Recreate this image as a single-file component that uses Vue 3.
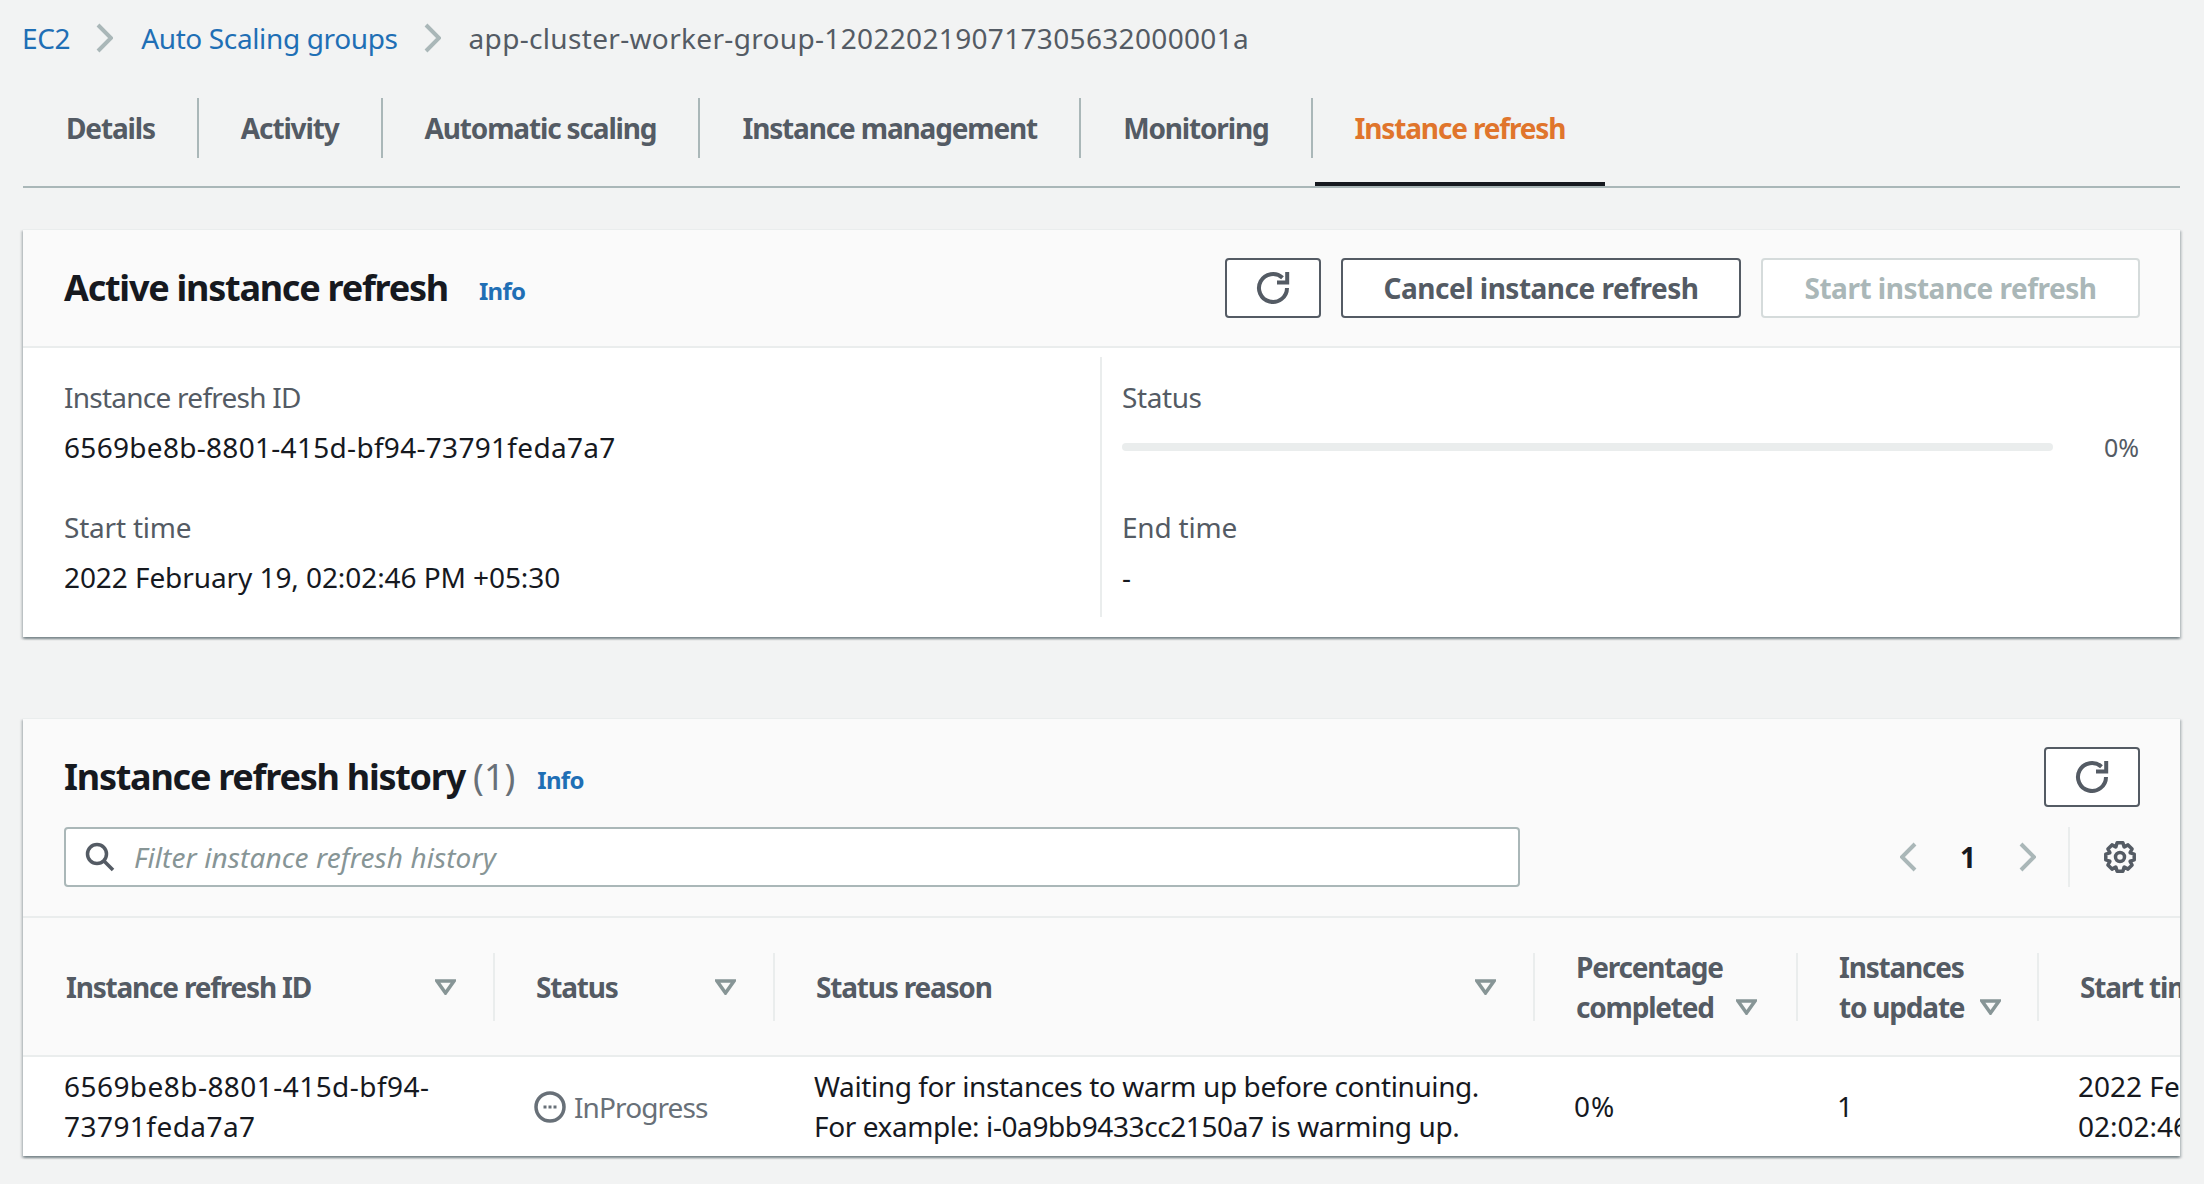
<script setup>
import { computed } from 'vue'

const tabs = ['Details', 'Activity', 'Automatic scaling', 'Instance management', 'Monitoring', 'Instance refresh']

const columns = [
  { key: 'id', lines: ['Instance refresh ID'], caret: true },
  { key: 'status', lines: ['Status'], caret: true },
  { key: 'reason', lines: ['Status reason'], caret: true },
  { key: 'pct', lines: ['Percentage', 'completed'], caret: true },
  { key: 'count', lines: ['Instances', 'to update'], caret: true },
  { key: 'start', lines: ['Start time'], caret: false }
]

// gear outline, 8 teeth
const gearPoints = computed(() => {
  const pts = []
  for (let i = 0; i < 8; i++) {
    const a = (i * Math.PI) / 4
    for (const [r, off] of [[11, -0.38], [14.5, -0.2], [14.5, 0.2], [11, 0.38]]) {
      pts.push(`${(16 + r * Math.sin(a + off)).toFixed(2)},${(16 - r * Math.cos(a + off)).toFixed(2)}`)
    }
  }
  return pts.join(' ')
})
</script>

<template>
  <div class="page">
    <!-- breadcrumb -->
    <nav class="crumbs">
      <a class="link">EC2</a>
      <svg class="chev" width="18" height="30" viewBox="0 0 18 30"><path d="M3 2l13 13L3 28" /></svg>
      <a class="link">Auto Scaling groups</a>
      <svg class="chev" width="18" height="30" viewBox="0 0 18 30"><path d="M3 2l13 13L3 28" /></svg>
      <span class="current">app-cluster-worker-group-1202202190717305632000001a</span>
    </nav>

    <!-- tabs -->
    <div class="tabs">
      <div v-for="(tab, i) in tabs" :key="tab" class="tab" :class="{ active: i === tabs.length - 1 }">{{ tab }}</div>
    </div>

    <!-- active refresh -->
    <section class="card">
      <header class="card-head">
        <div class="title-row">
          <h2 class="title">Active instance refresh</h2>
          <a class="info">Info</a>
        </div>
        <div class="actions">
          <button class="btn icon-btn">
            <svg width="34" height="34" viewBox="0 0 34 34" class="refresh"><path d="M31 17A14 14 0 1 1 26.5 6.7" /><path d="M21 11.5h10.2V1" /></svg>
          </button>
          <button class="btn cancel-btn">Cancel instance refresh</button>
          <button class="btn start-btn">Start instance refresh</button>
        </div>
      </header>
      <div class="details">
        <div class="col">
          <div class="label tight">Instance refresh ID</div>
          <div class="value mono-ish">6569be8b-8801-415d-bf94-73791feda7a7</div>
          <div class="label second">Start time</div>
          <div class="value date">2022 February 19, 02:02:46 PM +05:30</div>
        </div>
        <div class="col col-right">
          <div class="label">Status</div>
          <div class="value progress">
            <div class="bar"></div>
            <span class="pct">0%</span>
          </div>
          <div class="label second">End time</div>
          <div class="value">-</div>
        </div>
      </div>
    </section>

    <!-- history -->
    <section class="card history">
      <header class="history-head">
        <div class="history-top">
          <div class="title-row">
            <h2 class="title">Instance refresh history <span class="count">(1)</span></h2>
            <a class="info near">Info</a>
          </div>
          <button class="btn icon-btn">
            <svg width="34" height="34" viewBox="0 0 34 34" class="refresh"><path d="M31 17A14 14 0 1 1 26.5 6.7" /><path d="M21 11.5h10.2V1" /></svg>
          </button>
        </div>
        <div class="filter-row">
          <div class="search">
            <svg width="30" height="30" viewBox="0 0 30 30" class="search-icon"><circle cx="12" cy="12" r="9.5" /><path d="M19 19l9 9" /></svg>
            <span class="placeholder">Filter instance refresh history</span>
          </div>
          <div class="pager">
            <svg class="chev" width="18" height="30" viewBox="0 0 18 30"><path d="M15 2L2 15l13 13" /></svg>
            <span class="page-num">1</span>
            <svg class="chev" width="18" height="30" viewBox="0 0 18 30"><path d="M3 2l13 13L3 28" /></svg>
          </div>
          <div class="prefs">
            <svg width="32" height="32" viewBox="0 0 32 32" class="gear"><polygon :points="gearPoints" /><circle cx="16" cy="16" r="4.500" /></svg>
          </div>
        </div>
      </header>

      <div class="table-wrap">
        <table class="table">
          <thead>
            <tr>
              <th v-for="c in columns" :key="c.key" :class="'c-' + c.key">
                <div class="th-inner">
                  <span class="th-text">
                    <template v-for="(line, i) in c.lines" :key="line">
                      <br v-if="i > 0" />{{ line }}
                    </template>
                    <svg v-if="c.caret && c.lines.length > 1" class="caret inline" width="21" height="16" viewBox="0 0 21 16"><path d="M2 2h17l-8.500 12z" /></svg>
                  </span>
                  <svg v-if="c.caret && c.lines.length === 1" class="caret" width="21" height="16" viewBox="0 0 21 16"><path d="M2 2h17l-8.500 12z" /></svg>
                </div>
              </th>
            </tr>
          </thead>
          <tbody>
            <tr>
              <td class="id-cell">6569be8b-8801-415d-bf94-<br />73791feda7a7</td>
              <td>
                <span class="state">
                  <svg width="32" height="32" viewBox="0 0 32 32"><circle cx="16" cy="16" r="14" class="ring" /><rect x="9.500" y="14.500" width="3" height="3" /><rect x="14.500" y="14.500" width="3" height="3" /><rect x="19.500" y="14.500" width="3" height="3" /></svg>
                  InProgress
                </span>
              </td>
              <td class="reason">Waiting for instances to warm up before continuing.<br />For example: i-0a9bb9433cc2150a7 is warming up.</td>
              <td class="pct-cell">0%</td>
              <td>1</td>
              <td>2022 February 19,<br />02:02:46 PM +05:30</td>
            </tr>
          </tbody>
        </table>
      </div>
    </section>
  </div>
</template>

<style>
html, body {
  margin: 0;
  background: #f2f3f3;
}
</style>

<style scoped>
.page {
  box-sizing: border-box;
  width: 2204px;
  height: 1184px;
  padding: 0 24px 0 23px;
  overflow: hidden;
  background: #f2f3f3;
  font-family: "Noto Sans", "Open Sans", sans-serif;
  font-size: 28px;
  line-height: 40px;
  color: #16191f;
}

.crumbs {
  display: flex;
  align-items: center;
  height: 76px;
  margin-left: -1px;
}
.link {
  color: #1f6fb5;
  letter-spacing: -0.37px;
}
.crumbs .chev { margin: 0 28px 0 25px; }
.current {
  color: #545b64;
  letter-spacing: 0.33px;
}

.chev path {
  fill: none;
  stroke: #aab7b8;
  stroke-width: 4;
}

.tabs {
  display: flex;
  box-sizing: border-box;
  height: 112px;
  padding-top: 22px;
  border-bottom: 2px solid #aab7b8;
}
.tab {
  position: relative;
  display: flex;
  align-items: center;
  height: 60px;
  padding: 0 42px;
  border-right: 2px solid #aab7b8;
  font-weight: 700;
  letter-spacing: -1.15px;
  color: #545b64;
}
.tab:first-child { padding-left: 43px; }
.tab.active {
  border-right: 0;
  color: #e0752c;
}
.tab.active::after {
  content: "";
  position: absolute;
  left: 2px;
  right: 2px;
  bottom: -28px;
  height: 4px;
  background: #16191f;
}

.card {
  margin-top: 41px;
  background: #fff;
  border-top: 1px solid #eaeded;
  box-shadow: 0 2px 2px rgba(0, 28, 36, 0.3), 2px 2px 2px rgba(0, 28, 36, 0.15), -2px 2px 2px rgba(0, 28, 36, 0.15);
}
.card.history { margin-top: 81px; }

.card-head {
  display: flex;
  justify-content: space-between;
  align-items: center;
  height: 116px;
  padding: 0 40px 0 41px;
  background: #fafafa;
  border-bottom: 2px solid #eaeded;
}
.title-row {
  display: flex;
  align-items: center;
  gap: 31px;
}
.title {
  margin: 0;
  font-size: 36px;
  line-height: 44px;
  font-weight: 700;
  letter-spacing: -1.25px;
}
.count {
  font-weight: 400;
  letter-spacing: 0;
  color: #687078;
}
.info {
  margin-top: 6px;
  font-size: 24px;
  font-weight: 700;
  letter-spacing: -0.7px;
  color: #1f6fb5;
}
.info.near { margin-left: -9px; }
.actions {
  display: flex;
  gap: 20px;
}
.btn {
  box-sizing: border-box;
  height: 60px;
  padding: 0;
  background: #fff;
  border: 2px solid #545b64;
  border-radius: 4px;
  font-family: inherit;
  font-size: 28px;
  font-weight: 700;
  letter-spacing: -0.5px;
  color: #545b64;
}
.icon-btn {
  display: flex;
  align-items: center;
  justify-content: center;
  width: 96px;
}
.cancel-btn { width: 400px; }
.start-btn {
  width: 379px;
  border-color: #d5dbdb;
  color: #aab7b8;
}
.refresh path {
  fill: none;
  stroke: #545b64;
  stroke-width: 4;
}

.details {
  display: grid;
  grid-template-columns: 1077px 1fr;
  padding: 9px 0 20px;
}
.col { padding: 20px 41px; }
.col-right {
  padding-left: 20px;
  border-left: 2px solid #eaeded;
}
.label {
  color: #545b64;
  letter-spacing: -0.4px;
}
.label.tight { letter-spacing: -0.75px; }
.label.second {
  margin-top: 40px;
  letter-spacing: -0.2px;
}
.value { margin-top: 10px; }
.value.date { letter-spacing: -0.08px; }
.mono-ish { letter-spacing: 0.3px; }
.progress {
  display: flex;
  align-items: center;
}
.bar {
  flex: 1;
  height: 8px;
  border-radius: 4px;
  background: #eaeded;
}
.pct {
  width: 86px;
  text-align: right;
  font-size: 25px;
  color: #545b64;
}

.history-head {
  padding: 28px 40px 29px 41px;
  background: #fafafa;
  border-bottom: 2px solid #eaeded;
}
.history-top {
  display: flex;
  justify-content: space-between;
  align-items: center;
}
.filter-row {
  display: flex;
  align-items: center;
  margin-top: 20px;
}
.search {
  display: flex;
  align-items: center;
  box-sizing: border-box;
  width: 1456px;
  height: 60px;
  padding-left: 19px;
  background: #fff;
  border: 2px solid #aab7b8;
  border-radius: 4px;
}
.search-icon circle,
.search-icon path {
  fill: none;
  stroke: #545b64;
  stroke-width: 3.5;
}
.placeholder {
  margin-left: 19px;
  font-style: italic;
  letter-spacing: 0.1px;
  color: #879596;
}
.pager {
  display: flex;
  align-items: center;
  gap: 42px;
  margin-left: auto;
  padding-right: 32px;
}
.page-num { font-weight: 700; }
.prefs {
  display: flex;
  align-items: center;
  height: 60px;
  padding: 0 4px 0 34px;
  border-left: 2px solid #eaeded;
}
.gear polygon,
.gear circle {
  fill: none;
  stroke: #545b64;
  stroke-width: 3.5;
  stroke-linejoin: round;
}

.table-wrap { overflow: hidden; }
.table {
  width: 2516px;
  table-layout: fixed;
  border-collapse: collapse;
}
.c-id { width: 472px; }
.c-status { width: 280px; }
.c-reason { width: 760px; }
.c-pct { width: 263px; }
.c-count { width: 241px; }
th {
  box-sizing: border-box;
  position: relative;
  height: 138px;
  padding: 0 39px 0 41px;
  background: #fafafa;
  border-bottom: 2px solid #eaeded;
  font-weight: 700;
  letter-spacing: -1.2px;
  text-align: left;
  color: #545b64;
}
th:first-child { padding-left: 43px; }
th:not(:last-child)::after {
  content: "";
  position: absolute;
  top: 35px;
  right: 0;
  height: 68px;
  border-right: 2px solid #eaeded;
}
.th-inner {
  display: flex;
  justify-content: space-between;
  align-items: center;
}
.th-text { white-space: nowrap; }
.caret path {
  fill: none;
  stroke: #879596;
  stroke-width: 3.5;
}
.caret.inline {
  margin-left: 22px;
  vertical-align: 3px;
}
.c-count .caret.inline { margin-left: 16px; }
td {
  box-sizing: border-box;
  height: 100px;
  padding: 0 10px 2px 39px;
  white-space: nowrap;
  vertical-align: middle;
}
td:first-child { padding-left: 41px; }
.id-cell { letter-spacing: 0.45px; }
.reason { letter-spacing: -0.4px; }
.pct-cell { letter-spacing: 1px; }
.state {
  display: flex;
  align-items: center;
  gap: 8px;
  margin-top: 3px;
  letter-spacing: -0.9px;
  color: #687078;
}
.state .ring {
  fill: none;
  stroke: #687078;
  stroke-width: 3.5;
}
.state rect { fill: #687078; }
</style>
